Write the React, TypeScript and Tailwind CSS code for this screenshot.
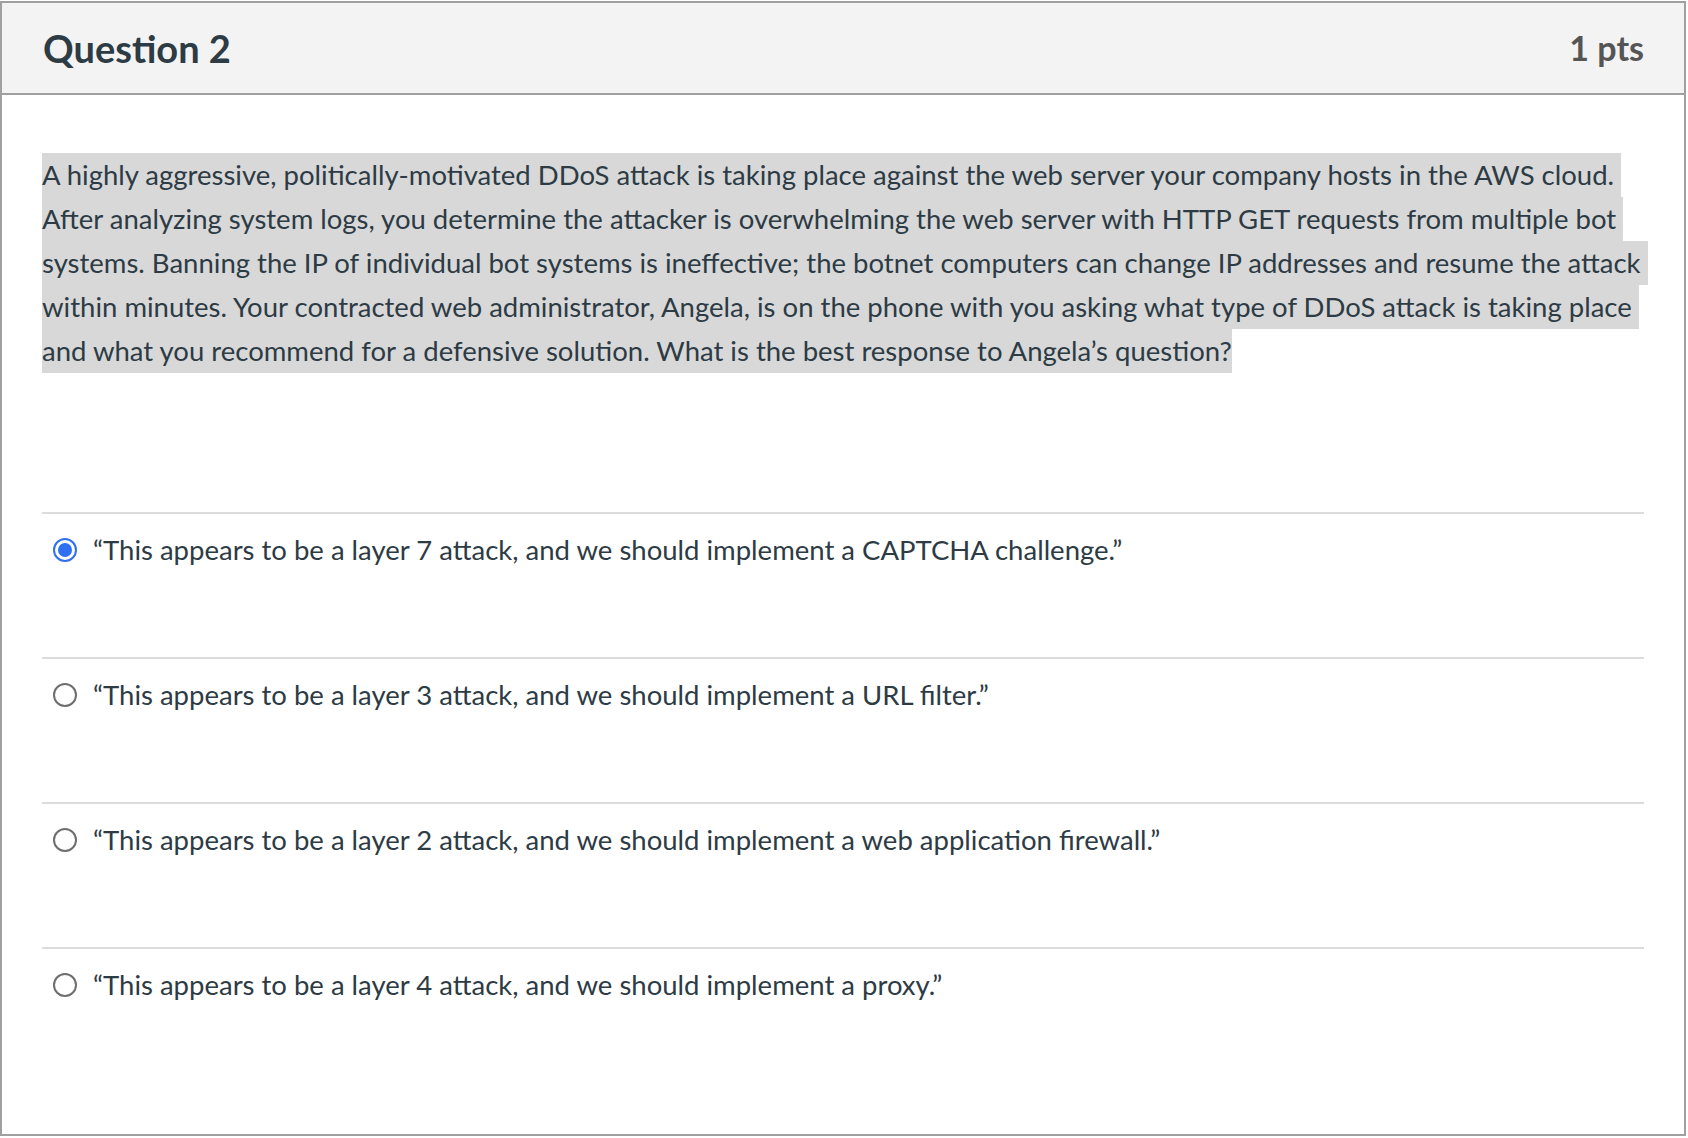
import { useState } from 'react'

const questionLines = [
  'A highly aggressive, politically-motivated DDoS attack is taking place against the web server your company hosts in the AWS cloud. ',
  'After analyzing system logs, you determine the attacker is overwhelming the web server with HTTP GET requests from multiple bot ',
  'systems. Banning the IP of individual bot systems is ineffective; the botnet computers can change IP addresses and resume the attack ',
  'within minutes. Your contracted web administrator, Angela, is on the phone with you asking what type of DDoS attack is taking place ',
  'and what you recommend for a defensive solution. What is the best response to Angela\u2019s question?',
]

const answers = [
  '\u201CThis appears to be a layer 7 attack, and we should implement a CAPTCHA challenge.\u201D',
  '\u201CThis appears to be a layer 3 attack, and we should implement a URL filter.\u201D',
  '\u201CThis appears to be a layer 2 attack, and we should implement a web application firewall.\u201D',
  '\u201CThis appears to be a layer 4 attack, and we should implement a proxy.\u201D',
]

function Radio({ checked }: { checked: boolean }) {
  if (checked) {
    return (
      <span className="w-[24px] h-[24px] rounded-full border-[2.5px] border-[#2f6ff2] flex items-center justify-center flex-shrink-0">
        <span className="w-[14px] h-[14px] rounded-full bg-[#2f6ff2]" />
      </span>
    )
  }
  return <span className="w-[24px] h-[24px] rounded-full border-2 border-[#6e6e6e] bg-white flex-shrink-0" />
}

export default function App() {
  const [selected, setSelected] = useState(0)

  return (
    <div className="bg-white w-[1688px] h-[1138px] pt-px" style={{ fontFamily: 'Lato, "Open Sans", sans-serif' }}>
      <div className="w-[1686px] h-[1135px] border-2 border-[#a0a0a0] flex flex-col">
        {/* Header */}
        <div className="h-[92px] bg-[#f3f3f3] border-b-2 border-[#a0a0a0] flex items-center justify-between pl-[41px] pr-[40px]">
          <h2 className="text-[38px] font-bold text-[#2d3b45] leading-none">Question 2</h2>
          <span className="text-[34px] font-bold text-[#555555] leading-none">1 pts</span>
        </div>

        {/* Body */}
        <div className="px-10 pt-[58px]">
          <div className="text-[27.5px] leading-[44px] text-[#2d3b45] whitespace-pre">
            {questionLines.map((line, i) => (
              <div key={i} className="w-fit bg-[#d8d8d8]">
                {line}
              </div>
            ))}
          </div>

          {/* Answers */}
          <div className="mt-[139px]">
            {answers.map((a, i) => (
              <div
                key={i}
                onClick={() => setSelected(i)}
                className="border-t-2 border-[#dcdcdc] h-[145px] pt-[14px] cursor-pointer"
              >
                <div className="flex items-center gap-[16px] pl-[11px] text-[27.5px] leading-[44px] text-[#2d3b45]">
                  <Radio checked={selected === i} />
                  <span>{a}</span>
                </div>
              </div>
            ))}
          </div>
        </div>
      </div>
    </div>
  )
}
